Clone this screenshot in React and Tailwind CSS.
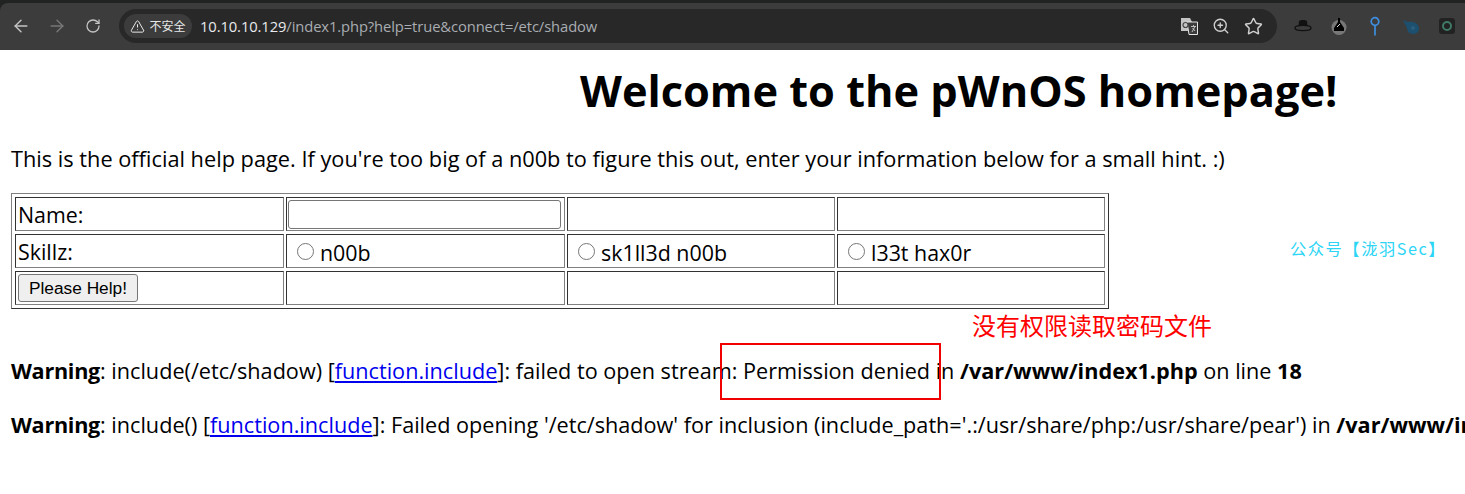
import React from "react";
import { ArrowLeft, ArrowRight, RotateCw, TriangleAlert, ZoomIn, Star } from "lucide-react";

const bodyFont = { fontFamily: '"Open Sans", sans-serif' };

function Cell({ children, className = "" }) {
  return (
    <td className={`border border-t-[#333] border-l-[#333] border-r-[#808080] border-b-[#808080] align-middle ${className}`}>
      {children}
    </td>
  );
}

function Radio({ label }) {
  return (
    <label className="flex items-center pl-[9px]">
      <span className="w-[17px] h-[17px] rounded-full border border-[#767676] bg-white mr-[6px]"></span>
      <span className="leading-[26px] pt-[4px]">{label}</span>
    </label>
  );
}

function Slot({ width, children }) {
  return <div className={`${width} h-[34px] flex items-center justify-center`}>{children}</div>;
}

function Toolbar() {
  return (
    <div className="h-[50px] bg-[#212323] pt-[3px]">
      <div className="h-[47px] bg-[#3c3c3c] rounded-tl-[8px] flex items-start pt-[6px]">
        <div className="flex pl-[3px] w-[119px] text-[#c4c4c4]">
          <Slot width="w-[36px]"><ArrowLeft size={20} strokeWidth={1.7} /></Slot>
          <Slot width="w-[36px]"><ArrowRight size={20} strokeWidth={1.7} className="text-[#777]" /></Slot>
          <Slot width="w-[36px]"><RotateCw size={16} strokeWidth={1.9} /></Slot>
        </div>
        <div className="w-[1158px] h-[34px] rounded-full bg-[#282828] flex items-center pl-[5px] pr-[8px]">
          <div className="h-[24px] w-[68px] rounded-full bg-[#3c3c3c] flex items-center justify-center gap-[4px] text-[#e8e8e8] text-[12px] font-['Noto_Sans_CJK_SC',sans-serif]">
            <TriangleAlert size={15} strokeWidth={1.6} />
            <span>不安全</span>
          </div>
          <div className="ml-[8px] text-[14.75px] font-['Open_Sans',sans-serif] tracking-[-0.1px]">
            <span className="text-[#e8eaed]">10.10.10.129</span>
            <span className="text-[#a9adb2]">/index1.php?help=true&amp;connect=/etc/shadow</span>
          </div>
          <div className="ml-auto flex text-[#d0d0d0]">
            <Slot width="w-[32px]">
              <svg width="17" height="17" viewBox="0 0 17 17">
                <path d="M0 0h9l2 4v9H0z" fill="#c4c4c4" />
                <path d="M6 4h10.500v12.500H8z" fill="#3c3c3c" stroke="#e4e4e4" strokeWidth="1" />
                <circle cx="4.500" cy="7" r="2.500" fill="none" stroke="#444" strokeWidth="1.200" />
                <path d="M10 8.500h5M12.500 7v1.500M11 14l3-5.500M11.500 10l2.500 3" stroke="#ccc" strokeWidth="0.900" fill="none" />
              </svg>
            </Slot>
            <Slot width="w-[32px]"><ZoomIn size={18} strokeWidth={1.8} /></Slot>
            <Slot width="w-[32px]"><Star size={19} strokeWidth={1.8} /></Slot>
          </div>
        </div>
        <div className="flex pl-[8px]">
          <Slot width="w-[36px]">
            <svg width="18" height="14" viewBox="0 0 18 14">
              <path d="M5 2c1-1.500 7-1.500 8 0l.5 5h-9z" fill="#111" />
              <ellipse cx="9" cy="9" rx="8" ry="2.600" fill="none" stroke="#111" strokeWidth="1.300" />
            </svg>
          </Slot>
          <Slot width="w-[36px]">
            <svg width="16" height="18" viewBox="0 0 16 18">
              <circle cx="8" cy="10.500" r="7.500" fill="#777" />
              <path d="M7 1h2v4l4 6v3H3v-3l4-6z" fill="#000" />
              <path d="M6 10l3-3" stroke="#ddd" strokeWidth="1" />
            </svg>
          </Slot>
          <Slot width="w-[36px]">
            <svg width="10" height="20" viewBox="0 0 10 20" className="mb-[1px]">
              <circle cx="5" cy="5.500" r="3.800" fill="none" stroke="#3f8fe0" strokeWidth="1.700" />
              <path d="M5 9.500v10" stroke="#3f8fe0" strokeWidth="1.700" />
            </svg>
          </Slot>
          <Slot width="w-[36px]">
            <svg width="18" height="16" viewBox="0 0 18 16" className="mt-[2px]">
              <path d="M1 1l5 2c5-1 11 1 11 7 0 3-3 5-6 5-4 0-6-3-6-6z" fill="#1d4f6e" />
              <circle cx="11" cy="9" r="2" fill="#2b5d7c" />
            </svg>
          </Slot>
          <Slot width="w-[36px]">
            <div className="w-[16px] h-[16px] rounded-[3px] bg-[#222] flex items-center justify-center">
              <div className="w-[10px] h-[10px] rounded-full border-2 border-[#3f7a68]"></div>
            </div>
          </Slot>
        </div>
      </div>
    </div>
  );
}

export default function App() {
  return (
    <div className="relative w-[1465px] h-[494px] overflow-hidden bg-white text-black" style={bodyFont}>
      <Toolbar />

      <div className="pl-[11px]">
        <h1 className="pl-[569px] pt-[14px] text-[43.35px] leading-[54px] font-bold whitespace-nowrap">
          Welcome to the pWnOS homepage!
        </h1>
        <p className="mt-[28px] text-[21.75px] leading-[26px] whitespace-nowrap">
          This is the official help page. If you're too big of a n00b to figure this out, enter your information below for a small hint. :)
        </p>

        <table className="mt-[21px] w-[1098px] px-px border-separate [border-spacing:2px_3px] border border-t-[#808080] border-l-[#808080] border-r-[#333] border-b-[#333] text-[21.4px] leading-[26px] table-fixed">
          <tbody>
            <tr className="h-[34px]">
              <Cell className="w-[269px] px-[2px] pt-[2px]">Name:</Cell>
              <Cell className="w-[279px] p-px">
                <div className="h-[29px] mr-[2px] rounded-[3px] border border-[#767676] bg-white"></div>
              </Cell>
              <Cell className="w-[268px]"></Cell>
              <Cell className="w-[268px]"></Cell>
            </tr>
            <tr className="h-[34px]">
              <Cell className="px-[2px] pt-[2px]">Skillz:</Cell>
              <Cell className="p-px"><Radio label="n00b" /></Cell>
              <Cell className="p-px"><Radio label="sk1ll3d n00b" /></Cell>
              <Cell className="p-px"><Radio label="l33t hax0r" /></Cell>
            </tr>
            <tr className="h-[34px]">
              <Cell className="px-[2px]">
                <button className="block h-[28px] w-[120px] rounded-[3px] border border-[#767676] bg-[#efefef] text-[17.3px] font-['Liberation_Sans',sans-serif]">
                  Please Help!
                </button>
              </Cell>
              <Cell></Cell>
              <Cell></Cell>
              <Cell></Cell>
            </tr>
          </tbody>
        </table>

        <p className="mt-[48px] text-[21.65px] leading-[28px] whitespace-nowrap">
          <b className="tracking-[-0.3px]">Warning</b>: include(/etc/shadow) [<a href="#" className="text-[#0000ee] underline">function.include</a>]: failed to open stream: Permission denied in <b>/var/www/index1.php</b> on line <b>18</b>
        </p>
        <p className="mt-[26px] text-[21.65px] leading-[28px] whitespace-nowrap">
          <b className="tracking-[-0.3px]">Warning</b>: include() [<a href="#" className="text-[#0000ee] underline">function.include</a>]: Failed opening '/etc/shadow' for inclusion (include_path='.:/usr/share/php:/usr/share/pear') in <b>/var/www/index1.php</b> on line <b>18</b>
        </p>
      </div>

      {/* annotations pasted on top of the screenshot */}
      <div className="absolute left-[1290px] top-[237px] text-[16.3px] tracking-[1.5px] leading-[22px] text-[#2cd5f5] font-['Noto_Sans_CJK_SC',sans-serif] whitespace-nowrap">
        公众号【泷羽Sec】
      </div>
      <div className="absolute left-[972px] top-[309px] text-[24px] leading-[32px] text-[#ff0000] font-['Noto_Sans_CJK_SC',sans-serif] whitespace-nowrap">
        没有权限读取密码文件
      </div>
      <div className="absolute left-[720px] top-[343px] w-[221px] h-[57px] border-2 border-[#f00000]"></div>
    </div>
  );
}
